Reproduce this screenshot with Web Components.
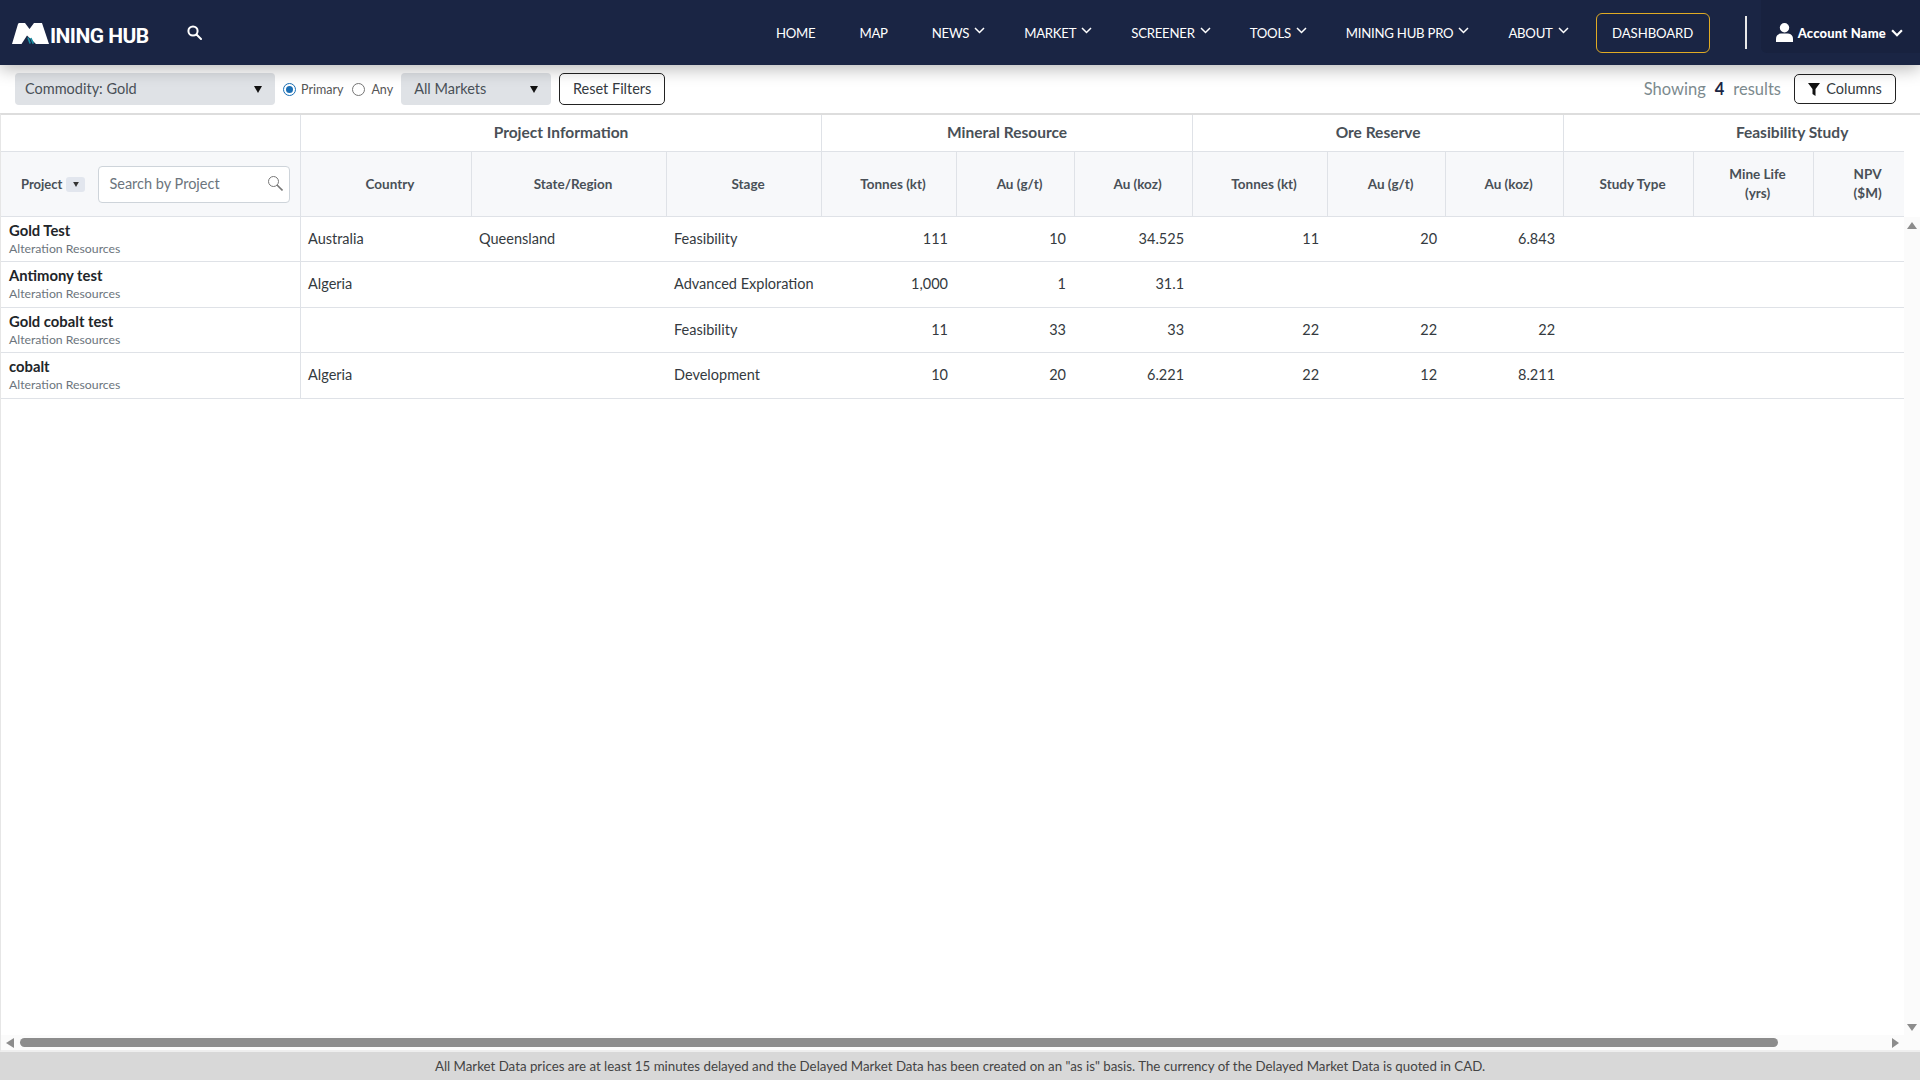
<!DOCTYPE html>
<html lang="en">
<head>
<meta charset="utf-8">
<title>Mining Hub</title>
<style>
  html, body { margin: 0; height: 100%; }
  body {
    display: flex;
    flex-direction: column;
    height: 100vh;
    overflow: hidden;
    font-family: Lato, 'Noto Sans', sans-serif;
    color: #343a40;
    background: #fff;
  }
  hub-grid { flex: 1; min-height: 0; }
</style>
</head>
<body>
  <hub-header>
    <hub-nav-item>Home</hub-nav-item>
    <hub-nav-item>Map</hub-nav-item>
    <hub-nav-item menu>News</hub-nav-item>
    <hub-nav-item menu>Market</hub-nav-item>
    <hub-nav-item menu>Screener</hub-nav-item>
    <hub-nav-item menu>Tools</hub-nav-item>
    <hub-nav-item menu>Mining Hub Pro</hub-nav-item>
    <hub-nav-item menu last>About</hub-nav-item>
  </hub-header>
  <hub-toolbar></hub-toolbar>
  <hub-grid></hub-grid>
  <hub-footer>All Market Data prices are at least 15 minutes delayed and the Delayed Market Data has been created on an "as is" basis. The currency of the Delayed Market Data is quoted in CAD.</hub-footer>

<script>
const chevron = (w, h, sw) => `<svg width="${w}" height="${h}" viewBox="0 0 11 7" fill="none" stroke="#fff" stroke-width="${sw}"><path d="M1 1l4.5 4.5L10 1"/></svg>`;
const caret = (w, h, color) => `<svg width="${w}" height="${h}" viewBox="0 0 8 7" fill="${color}"><path d="M0 0h8L4 7z"/></svg>`;

const tplNavItem = document.createElement('template');
tplNavItem.innerHTML = `
  <style>
    :host {
      display: flex;
      align-items: center;
      gap: 5px;
      margin-right: 44px;
      font-size: 13.200px;
      letter-spacing: -0.250px;
      line-height: 20px;
      color: #fff;
      text-transform: uppercase;
      white-space: nowrap;
    }
    :host([menu]) { margin-right: 39px; }
    :host([last]) { margin-right: 0; }
    svg { margin-top: -5px; }
  </style>
  <slot></slot>
`;
class HubNavItem extends HTMLElement {
  constructor() {
    super();
    const root = this.attachShadow({mode:'open'});
    root.appendChild(tplNavItem.content.cloneNode(true));
    if (this.hasAttribute('menu')) root.appendChild(document.createRange().createContextualFragment(chevron(11, 7, 1.5)));
  }
}
customElements.define('hub-nav-item', HubNavItem);

const tplHeader = document.createElement('template');
tplHeader.innerHTML = `
  <style>
    :host {
      display: flex;
      align-items: center;
      flex: none;
      height: 65px;
      background: #1a2544;
      box-shadow: 0 4px 16px rgba(0, 0, 0, 0.28);
      position: relative;
      z-index: 2;
    }
    .logo {
      display: flex;
      align-items: flex-end;
      gap: 1px;
      margin-left: 12px;
      color: #fff;
      font-family: Roboto, sans-serif;
      font-weight: 700;
      font-size: 21px;
      line-height: 15px;
      letter-spacing: -0.550px;
      padding-top: 1px;
    }
    .logo span { display: block; height: 15px; }
    .find { margin-left: 38px; margin-top: -1px; display: block; }
    nav { display: flex; align-items: center; margin-left: auto; }
    .dash {
      display: flex;
      align-items: center;
      justify-content: center;
      box-sizing: border-box;
      width: 114px;
      height: 40px;
      margin-left: 27px;
      border: 1px solid #e0ab24;
      border-radius: 6px;
      font-size: 13.200px;
      letter-spacing: -0.100px;
      color: #fff;
    }
    .rule { width: 2px; height: 33px; margin: 0 14px 0 35px; background: #e8e8e8; }
    .account {
      display: flex;
      align-items: center;
      gap: 5px;
      height: 53px;
      margin-top: -12px;
      padding: 12px 17px 0 15px;
      box-sizing: border-box;
      background: #18223f;
      border-radius: 0 0 0 6px;
      color: #fff;
      font-size: 13px;
      font-weight: 900;
      letter-spacing: 0.2px;
    }
  </style>
  <div class="logo">
    <svg width="37" height="21" viewBox="0 0 37 21">
      <path fill="#fff" d="M0 21L6 1q.3-1 1.500-1H13l4.500 6 4.500-6.000h8L37 21H24L15 12.500 9.500 21z"/>
      <path fill="none" stroke="#1c8ea3" stroke-width="1.700" d="M16 14.500l2.200 6M18.800 15l2.500 5.600"/>
    </svg>
    <span>INING HUB</span>
  </div>
  <svg class="find" width="15" height="15" viewBox="0 0 15 15" fill="none" stroke="#fff" stroke-width="2"><circle cx="6" cy="6" r="4.600"/><path d="M9.500 9.500l4.500 4.500" stroke-linecap="round"/></svg>
  <nav><slot></slot></nav>
  <div class="dash">DASHBOARD</div>
  <div class="rule"></div>
  <div class="account">
    <svg width="17" height="19" viewBox="0 0 17 19" fill="#fff"><circle cx="8.500" cy="4.800" r="4.700"/><path d="M0 19v-3q0-5 5-5.500h7q5 .5 5 5.500v3z"/></svg>
    <span>Account Name</span>
    ${chevron(12, 8, 2)}
  </div>
`;
class HubHeader extends HTMLElement {
  constructor() {
    super();
    this.attachShadow({mode:'open'}).appendChild(tplHeader.content.cloneNode(true));
  }
}
customElements.define('hub-header', HubHeader);

const tplSelect = document.createElement('template');
tplSelect.innerHTML = `
  <style>
    :host {
      display: flex;
      align-items: center;
      justify-content: space-between;
      box-sizing: border-box;
      height: 32px;
      padding: 0 13px 2px 10px;
      background: #dfe2e6;
      border-radius: 4px;
      font-size: 14.500px;
      color: #495057;
    }
    svg { margin-top: 2px; }
  </style>
  <slot></slot>
  ${caret(8, 7, '#111')}
`;
class HubSelect extends HTMLElement {
  constructor() {
    super();
    this.attachShadow({mode:'open'}).appendChild(tplSelect.content.cloneNode(true));
  }
}
customElements.define('hub-select', HubSelect);

const tplRadio = document.createElement('template');
tplRadio.innerHTML = `
  <style>
    :host {
      display: flex;
      align-items: center;
      gap: 5px;
      font-size: 12.500px;
      color: #555;
    }
    i {
      display: grid;
      place-items: center;
      box-sizing: border-box;
      width: 13px;
      height: 13px;
      border: 1px solid #767676;
      border-radius: 50%;
      background: #fff;
    }
    :host([checked]) i { border-color: #1b6fb5; }
    :host([checked]) i::after {
      content: '';
      width: 7px;
      height: 7px;
      border-radius: 50%;
      background: #1b6fb5;
    }
  </style>
  <i></i><slot></slot>
`;
class HubRadio extends HTMLElement {
  constructor() {
    super();
    this.attachShadow({mode:'open'}).appendChild(tplRadio.content.cloneNode(true));
  }
}
customElements.define('hub-radio', HubRadio);

const tplButton = document.createElement('template');
tplButton.innerHTML = `
  <style>
    :host {
      display: inline-flex;
      align-items: center;
      justify-content: center;
      gap: 6px;
      box-sizing: border-box;
      height: 32px;
      padding-bottom: 2px;
      border: 1px solid #222;
      border-radius: 5px;
      background: #fff;
      font-size: 14.500px;
      color: #343a40;
    }
    ::slotted(svg) { margin-top: 2px; }
  </style>
  <slot name="icon"></slot><slot></slot>
`;
class HubButton extends HTMLElement {
  constructor() {
    super();
    this.attachShadow({mode:'open'}).appendChild(tplButton.content.cloneNode(true));
  }
}
customElements.define('hub-button', HubButton);

const tplToolbar = document.createElement('template');
tplToolbar.innerHTML = `
  <style>
    :host {
      display: flex;
      align-items: center;
      flex: none;
      height: 48px;
      padding: 0 24px 0 15px;
      box-sizing: border-box;
      background: #fff;
    }
    .commodity { width: 260px; margin-right: 8px; }
    .any { margin-left: 9px; gap: 6px; }
    .markets { width: 150px; margin: 0 8px; padding-left: 13px; }
    .reset { width: 106px; }
    .count {
      display: flex;
      gap: 9px;
      margin-left: auto;
      font-size: 16.500px;
      color: #7c8a8e;
    }
    .count b { font-weight: 700; color: #1a2544; }
    .columns { width: 102px; height: 30px; margin-left: 13px; }
  </style>
  <hub-select class="commodity">Commodity: Gold</hub-select>
  <hub-radio checked>Primary</hub-radio>
  <hub-radio class="any">Any</hub-radio>
  <hub-select class="markets">All Markets</hub-select>
  <hub-button class="reset">Reset Filters</hub-button>
  <div class="count"><span>Showing</span><b>4</b><span>results</span></div>
  <hub-button class="columns">
    <svg slot="icon" width="12" height="13" viewBox="0 0 12 13" fill="#111"><path d="M0 0h12L7.500 6v7l-3-2V6z"/></svg>
    Columns
  </hub-button>
`;
class HubToolbar extends HTMLElement {
  constructor() {
    super();
    this.attachShadow({mode:'open'}).appendChild(tplToolbar.content.cloneNode(true));
  }
}
customElements.define('hub-toolbar', HubToolbar);

const tplGrid = document.createElement('template');
tplGrid.innerHTML = `
  <style>
    :host {
      display: grid;
      grid-template-columns: minmax(0, 1fr) 16px;
      grid-template-rows: minmax(0, 1fr) 15px;
      box-sizing: border-box;
      border-top: 2px solid #dddddd;
      border-left: 1px solid #e6e6e6;
      border-bottom: 2px solid #eeeeee;
      background: #fff;
    }
    .view { overflow: hidden; }
    table {
      table-layout: fixed;
      width: 2020px;
      border-collapse: separate;
      border-spacing: 0;
      font-size: 14.500px;
      color: #343a40;
    }
    th, td {
      padding: 0 9px 2px 7px;
      border-bottom: 1px solid #dfe2e7;
      box-sizing: border-box;
      overflow: hidden;
      white-space: nowrap;
    }
    th { color: #495057; text-align: center; font-weight: 700; font-size: 13.500px; line-height: 19px; border-right: 1px solid #dfe2e7; padding: 0 4px 0 12px; }
    .groups th { height: 37px; font-size: 15.500px; font-weight: 700; background: #fff; padding: 0 0 2px; }
    .labels th { height: 65px; background: #f7f8fa; }
    th.project { padding: 0; text-align: left; font-size: 13px; }
    td.num { text-align: right; }
    td.first { border-right: 1px solid #dfe2e7; padding: 0 8px 1px; }
    .name { display: block; font-weight: 700; font-size: 14.800px; line-height: 19px; color: #212529; }
    .owner { display: block; font-size: 12.250px; line-height: 16px; color: #6c757d; margin-top: 1px; }
    .tools { display: flex; align-items: center; padding-left: 20px; }
    .sort {
      display: grid;
      place-items: center;
      width: 19px;
      height: 15px;
      margin: 0 13px 0 4px;
      border-radius: 3px;
      background: #e2e6ee;
    }
    .search {
      display: flex;
      align-items: center;
      justify-content: space-between;
      box-sizing: border-box;
      width: 192px;
      height: 37px;
      padding: 0 6px 2px 10px;
      border: 1px solid #ced4da;
      border-radius: 4px;
      background: #fff;
      font-weight: 400;
      font-size: 14.500px;
      color: #6c757d;
    }
    .vbar, .hbar { display: flex; background: #fbfbfb; }
    .vbar {
      flex-direction: column;
      align-items: center;
      justify-content: space-between;
      margin-top: 102px;
      padding: 5px 0 4px;
    }
    .hbar { grid-column: 1 / 3; align-items: center; padding: 0 21px 0 5px; }
    .thumb { width: 1758px; height: 9px; margin-left: 6px; border-radius: 5px; background: #8c8c8c; }
    .end { margin-left: auto; }
  </style>
  <div class="view">
    <table>
      <colgroup></colgroup>
      <thead>
        <tr class="groups">
          <th></th>
          <th colspan="3">Project Information</th>
          <th colspan="3">Mineral Resource</th>
          <th colspan="3">Ore Reserve</th>
          <th colspan="4">Feasibility Study</th>
        </tr>
        <tr class="labels">
          <th class="project">
            <div class="tools">
              <span>Project</span>
              <span class="sort">${caret(6, 5, '#333')}</span>
              <div class="search">
                <span>Search by Project</span>
                <svg width="15" height="15" viewBox="0 0 15 15" fill="none" stroke="#777"><circle cx="5.500" cy="5.500" r="5"/><path d="M9 9l5.500 5.500" stroke-width="1.600"/></svg>
              </div>
            </div>
          </th>
          <th>Country</th><th>State/Region</th><th>Stage</th>
          <th>Tonnes (kt)</th><th>Au (g/t)</th><th>Au (koz)</th>
          <th>Tonnes (kt)</th><th>Au (g/t)</th><th>Au (koz)</th>
          <th>Study Type</th><th>Mine Life<br>(yrs)</th><th>NPV<br>($M)</th><th></th>
        </tr>
      </thead>
      <tbody></tbody>
    </table>
  </div>
  <div class="vbar">
    <svg width="10" height="7" viewBox="0 0 10 7" fill="#8c8c8c"><path d="M5 0l5 7H0z"/></svg>
    <svg width="10" height="7" viewBox="0 0 10 7" fill="#8c8c8c"><path d="M0 0h10L5 7z"/></svg>
  </div>
  <div class="hbar">
    <svg width="8" height="10" viewBox="0 0 8 10" fill="#8c8c8c"><path d="M8 0v10L0 5z"/></svg>
    <div class="thumb"></div>
    <svg class="end" width="7" height="10" viewBox="0 0 7 10" fill="#8c8c8c"><path d="M0 0v10l7-5z"/></svg>
  </div>
`;

const columnWidths = [300,171,195,155,135,118,118,135,118,118,130,120,100,107];
const projects = [
  { h: 45, name: 'Gold Test', cells: ['Australia','Queensland','Feasibility','111','10','34.525','11','20','6.843'] },
  { h: 46, name: 'Antimony test', cells: ['Algeria','','Advanced Exploration','1,000','1','31.1','','',''] },
  { h: 45, name: 'Gold cobalt test', cells: ['','','Feasibility','11','33','33','22','22','22'] },
  { h: 46, name: 'cobalt', cells: ['Algeria','','Development','10','20','6.221','22','12','8.211'] },
];

class HubGrid extends HTMLElement {
  constructor() {
    super();
    const root = this.attachShadow({mode:'open'});
    root.appendChild(tplGrid.content.cloneNode(true));
    root.querySelector('colgroup').innerHTML = columnWidths.map(w => `<col style="width:${w}px">`).join('');
    root.querySelector('tbody').innerHTML = projects.map(p => `
      <tr style="height:${p.h}px">
        <td class="first"><span class="name">${p.name}</span><span class="owner">Alteration Resources</span></td>
        ${p.cells.map((c, i) => `<td${i > 2 ? ' class="num"' : ''}>${c}</td>`).join('')}
        <td></td><td></td><td></td><td></td>
      </tr>`).join('');
  }
}
customElements.define('hub-grid', HubGrid);

const tplFooter = document.createElement('template');
tplFooter.innerHTML = `
  <style>
    :host {
      display: flex;
      align-items: center;
      justify-content: center;
      flex: none;
      height: 28px;
      background: #d8d8d8;
      font-size: 13.300px;
      color: #444;
    }
  </style>
  <slot></slot>
`;
class HubFooter extends HTMLElement {
  constructor() {
    super();
    this.attachShadow({mode:'open'}).appendChild(tplFooter.content.cloneNode(true));
  }
}
customElements.define('hub-footer', HubFooter);
</script>
</body>
</html>
